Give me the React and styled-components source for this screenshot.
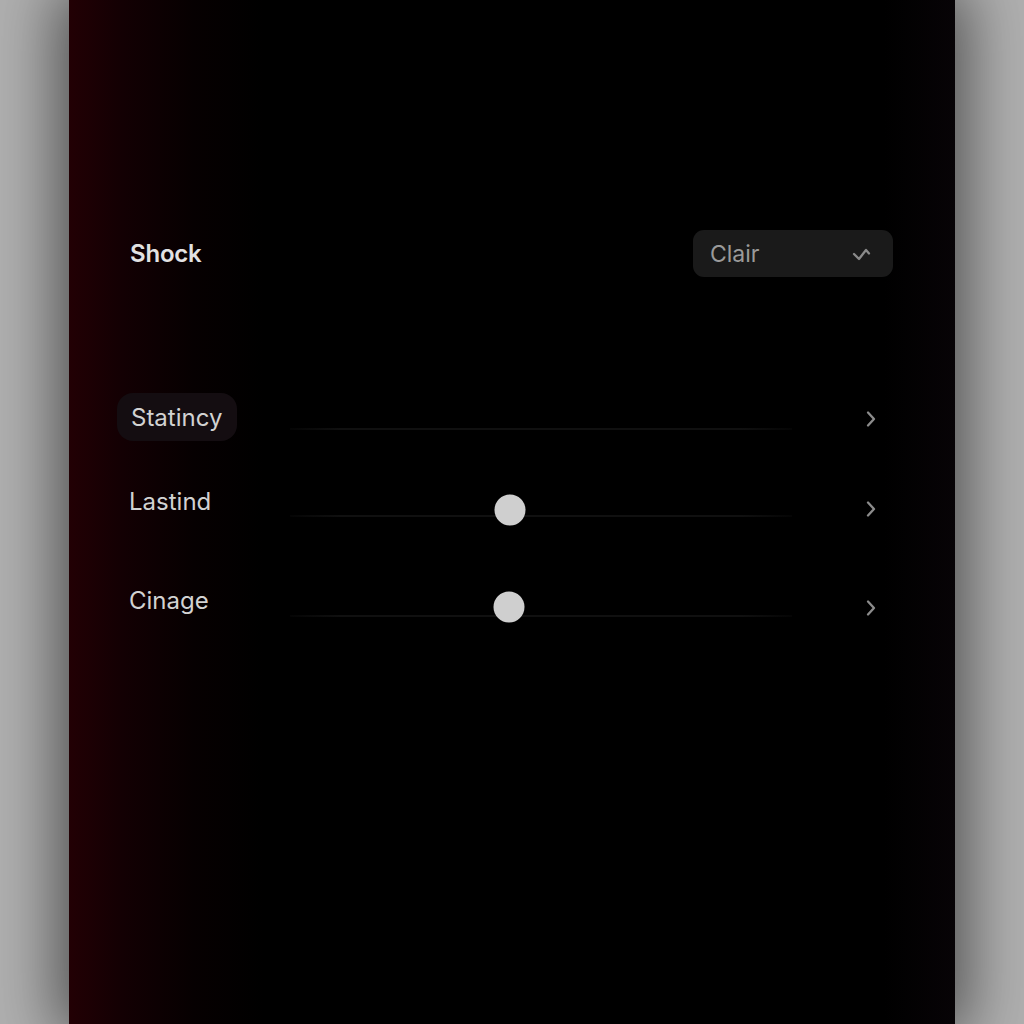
import React from "react";
import styled, { createGlobalStyle } from "styled-components";

const Global = createGlobalStyle`
  html, body { margin: 0; padding: 0; background: #b0b0b0; }
  body { font-family: Inter, "Noto Sans", Roboto, sans-serif; }
  #root { height: 1024px; overflow: hidden; }
`;

const Stage = styled.div`
  height: 1024px;
  display: flex;
  justify-content: center;
`;

const Panel = styled.div`
  width: 886px;
  height: 1024px;
  box-sizing: border-box;
  padding: 230px 62px 0 61px;
  background: linear-gradient(90deg, #220004 0%, #130003 6%, #060001 14%, #000 22%, #000 92%, #070306 100%);
  box-shadow: 0 0 60px 12px rgba(0, 0, 0, 0.55);
  display: flex;
  flex-direction: column;
`;

const Header = styled.div`
  display: flex;
  align-items: center;
  justify-content: space-between;
  height: 47px;
  margin-bottom: 116px;
`;

const Title = styled.div`
  font-size: 24px;
  font-weight: 600;
  color: #e2e2e2;
  letter-spacing: -0.2px;
`;

const Select = styled.div`
  width: 200px;
  height: 47px;
  box-sizing: border-box;
  border-radius: 11px;
  background: #1a1a1a;
  display: flex;
  align-items: center;
  justify-content: space-between;
  padding: 0 17px 0 17px;
  font-size: 23px;
  color: #9a9a9a;
`;

const Row = styled.div`
  display: grid;
  grid-template-columns: 160px 502px 1fr;
  align-items: center;
  height: 48px;
  margin-bottom: ${(p) => p.$gap || 0}px;
`;

const Label = styled.div`
  justify-self: start;
  font-size: 24px;
  color: #d2d2d2;
  padding: ${(p) => (p.$pill ? "0 15px 0 14px" : "0")};
  margin-left: ${(p) => (p.$pill ? "-13px" : "-1px")};
  height: 48px;
  display: flex;
  align-items: center;
  border-radius: 16px;
  background: ${(p) => (p.$pill ? "#140d11" : "transparent")};
`;

const TrackCell = styled.div`
  position: relative;
  height: 48px;
`;

const Track = styled.div`
  position: absolute;
  left: 0;
  right: 0;
  top: ${(p) => p.$y}px;
  height: 2px;
  background: linear-gradient(90deg, rgba(16,16,16,0.3), #101010 10%, #101010 90%, rgba(16,16,16,0.3));
`;

const Thumb = styled.div`
  position: absolute;
  width: 31px;
  height: 31px;
  border-radius: 50%;
  background: #cfcfcf;
  transform: translate(-50%, -50%);
`;

const ChevronCell = styled.div`
  justify-self: end;
  margin-right: 17px;
  display: flex;
  align-items: center;
  transform: translateY(${(p) => p.$dy || 0}px);
`;

const Chevron = () => (
  <svg width="10" height="18" viewBox="0 0 10 18" fill="none">
    <path d="M2 2.5 L8 9 L2 15.5" stroke="#8c8c8c" strokeWidth="2.3" strokeLinecap="round" strokeLinejoin="round" />
  </svg>
);

const Check = () => (
  <svg width="24" height="16" viewBox="0 0 24 16" fill="none">
    <path d="M2 8 L7 13 L14 4 L17 7.5" stroke="#8a8a8a" strokeWidth="2.3" strokeLinecap="round" strokeLinejoin="round" />
  </svg>
);

const rows = [
  { label: "Statincy", pill: true, trackY: 35, thumb: null, gap: 36, chev: 2 },
  { label: "Lastind", trackY: 38, thumb: { x: 220, y: 33 }, gap: 51, chev: 8 },
  { label: "Cinage", trackY: 39, thumb: { x: 219, y: 31 }, gap: 0, chev: 8 },
];

export default function App() {
  return (
    <>
      <Global />
      <Stage>
        <Panel>
          <Header>
            <Title>Shock</Title>
            <Select>
              <span>Clair</span>
              <Check />
            </Select>
          </Header>
          {rows.map((r) => (
            <Row key={r.label} $gap={r.gap}>
              <Label $pill={r.pill}>{r.label}</Label>
              <TrackCell>
                <Track $y={r.trackY} />
                {r.thumb && <Thumb style={{ left: r.thumb.x, top: r.thumb.y }} />}
              </TrackCell>
              <ChevronCell $dy={r.chev}>
                <Chevron />
              </ChevronCell>
            </Row>
          ))}
        </Panel>
      </Stage>
    </>
  );
}
